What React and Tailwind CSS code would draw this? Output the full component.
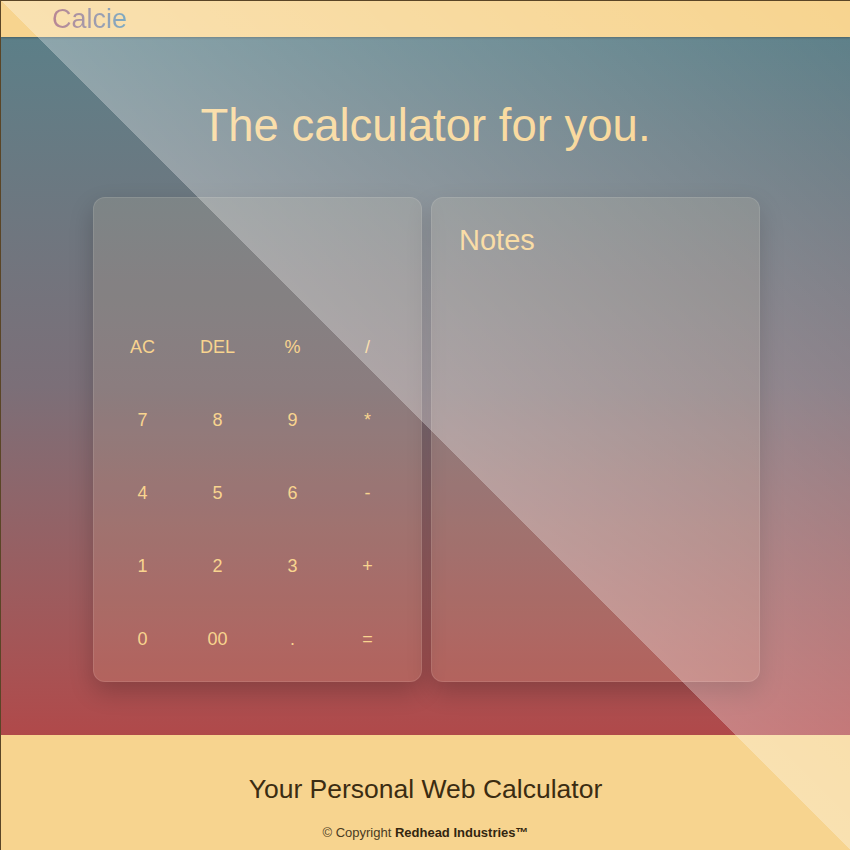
import React from 'react';

const keys = [
    ['AC', 'DEL', '%', '/'],
    ['7', '8', '9', '*'],
    ['4', '5', '6', '-'],
    ['1', '2', '3', '+'],
    ['0', '00', '.', '='],
];

const App = () => {
    return (
        <div className="relative h-[850px] overflow-hidden border-t border-l border-[#5a4526] font-['Liberation_Sans',Arial,sans-serif]">
            {/* HEADER */}
            <header className="h-[36px] bg-[#f7d48f] flex items-center pl-[51px] shadow-[0_1px_2px_rgba(0,0,0,0.25)] relative z-10">
                <h2 className="text-[27px] leading-none bg-gradient-to-r from-[#9c5468] to-[#4a8cae] bg-clip-text text-transparent">
                    Calcie
                </h2>
            </header>

            {/* MAIN */}
            <main className="h-[698px] bg-gradient-to-b from-[#5c7f88] via-[#7b6f78] to-[#b0494a] flex flex-col items-center">
                <h1 className="mt-[62px] text-[45.5px] leading-[53px] text-[#f8d48f]">The calculator for you.</h1>

                <div className="mt-[45px] ml-[2px] flex gap-[9px]">
                    {/* Calculator */}
                    <div className="w-[329px] h-[485px] rounded-xl bg-[rgba(255,228,180,0.12)] border border-white/10 shadow-[0_10px_25px_rgba(0,0,0,0.2)] flex flex-col justify-end pl-[11px] pr-[16px] pb-[5px]">
                        <div className="grid grid-cols-4">
                            {keys.flat().map((k, i) => (
                                <button key={i} className="h-[73px] text-[18px] text-[#f8d48f] flex items-center justify-center">
                                    {k}
                                </button>
                            ))}
                        </div>
                    </div>

                    {/* Notes */}
                    <div className="w-[329px] h-[485px] rounded-xl bg-[rgba(255,228,180,0.12)] border border-white/10 shadow-[0_10px_25px_rgba(0,0,0,0.2)] px-[27px] pt-[26px]">
                        <h3 className="text-[29px] leading-[33px] text-[#f8d48f]">Notes</h3>
                    </div>
                </div>
            </main>

            {/* FOOTER */}
            <footer className="h-[116px] bg-[#f7d48f] flex flex-col items-center text-[#3b2c12]">
                <p className="mt-[39px] text-[26.5px] leading-[30px]">Your Personal Web Calculator</p>
                <p className="mt-[19px] text-[13px] text-[#4a3b22]">
                    © Copyright <span className="font-bold text-[#33260f]">Redhead Industries™</span>
                </p>
            </footer>

            {/* diagonal sheen */}
            <div className="pointer-events-none absolute inset-0 z-20 bg-[linear-gradient(45deg,transparent_50%,rgba(255,255,255,0.3)_50%,rgba(255,255,255,0)_100%)]"></div>
        </div>
    );
};

export default App;
